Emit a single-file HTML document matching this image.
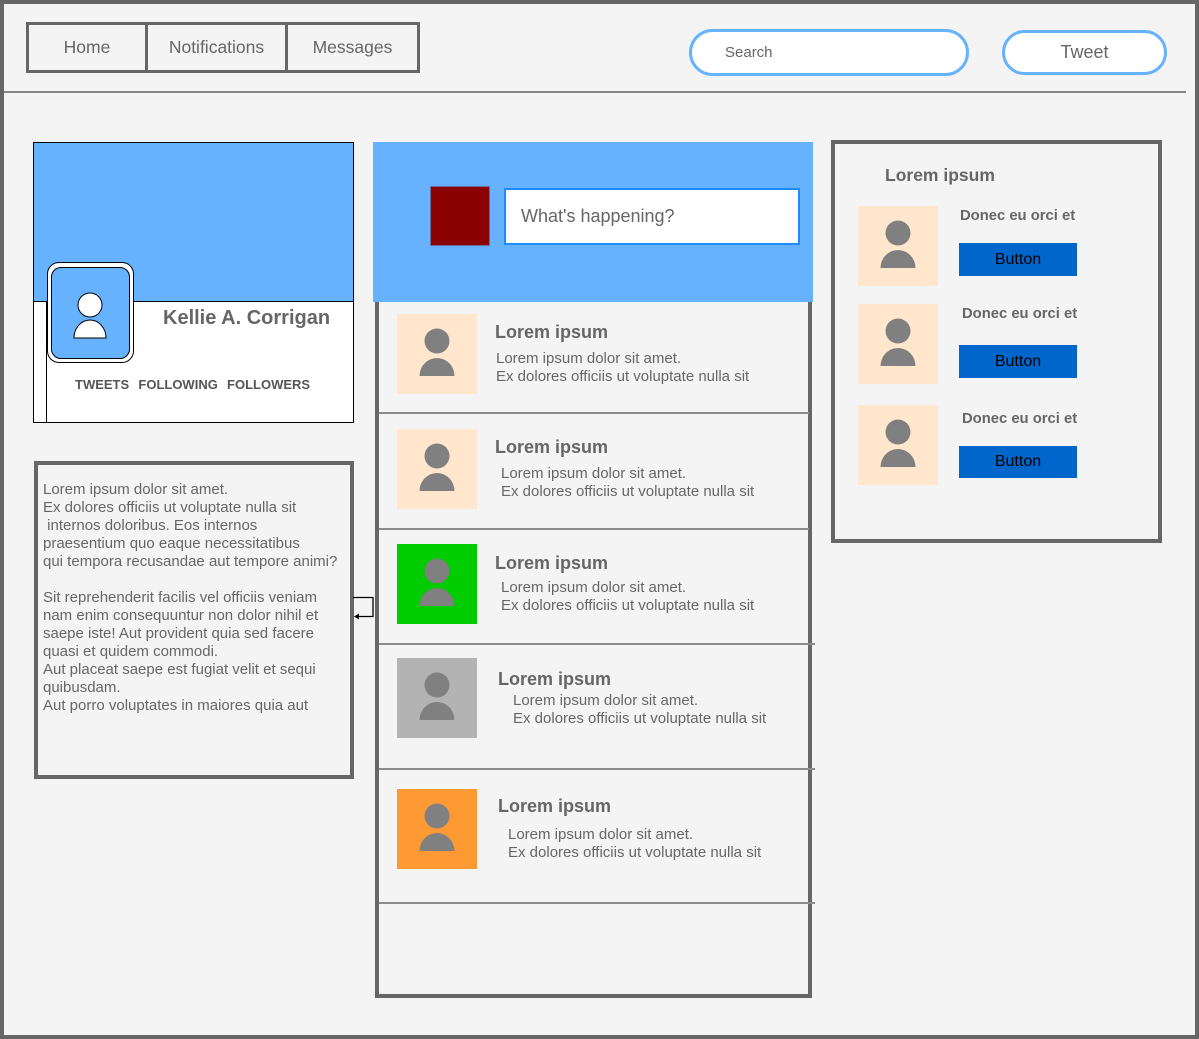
<!DOCTYPE html>
<html><head><meta charset="utf-8"><style>
*{margin:0;padding:0;box-sizing:border-box}
body{width:1199px;height:1039px;background:#f4f4f4;font-family:"Liberation Sans",Arial,sans-serif;color:#666;position:relative;overflow:hidden}
.a{position:absolute}
.frame{left:0;top:0;width:1199px;height:1039px;border:4px solid #666}
.nav{top:22px;height:51px;border:3px solid #666;font-size:17.5px;text-align:center;line-height:45px;color:#666}
.pill{border:3px solid #66b2ff;background:#fff;border-radius:24px}
.av{width:80px;height:80px}
.t{font-weight:bold;font-size:18px;line-height:22px;color:#666}
.s{font-size:15px;line-height:18px;color:#666}
.sep{height:2px;background:#8c8c8c}
.btn{width:118px;height:33px;background:#0066cc;color:#000;font-size:16px;text-align:center;line-height:33px}
.d{font-weight:bold;font-size:14.8px;color:#666}
</style></head><body>
<div class="a frame"></div>
<div class="a nav" style="left:26px;width:122px">Home</div>
<div class="a nav" style="left:145px;width:143px">Notifications</div>
<div class="a nav" style="left:285px;width:135px">Messages</div>
<div class="a pill" style="left:689px;top:29px;width:280px;height:47px"></div>
<div class="a" style="left:725px;top:44px;font-size:15px;color:#666">Search</div>
<div class="a pill" style="left:1002px;top:30px;width:165px;height:45px;text-align:center;line-height:39px;font-size:18px;color:#666">Tweet</div>
<div class="a" style="left:4px;top:91px;width:1182px;height:2px;background:#888"></div>

<!-- profile -->
<div class="a" style="left:33px;top:142px;width:321px;height:281px;border:1px solid #000;background:#fff"></div>
<div class="a" style="left:34px;top:143px;width:319px;height:159px;background:#66b2ff;border-bottom:1px solid #000"></div>
<div class="a" style="left:46px;top:302px;width:1px;height:120px;background:#000"></div>
<div class="a" style="left:47px;top:262px;width:87px;height:101px;border:1px solid #000;border-radius:12px;background:#fff"></div>
<div class="a" style="left:51px;top:267px;width:79px;height:92px;border:1px solid #000;border-radius:10px;background:#66b2ff"></div>
<svg class="a" style="left:51px;top:267px" width="79" height="92"><circle cx="39" cy="38" r="12" fill="#fff" stroke="#000"/><path d="M23 71 A16 18 0 0 1 55 71 Z" fill="#fff" stroke="#000"/></svg>
<div class="a" style="left:163px;top:307px;font-size:20px;font-weight:bold;color:#666">Kellie A. Corrigan</div>
<div class="a" style="left:75px;top:377px;font-size:13px;font-weight:bold;color:#555;word-spacing:1px">TWEETS &nbsp;FOLLOWING &nbsp;FOLLOWERS</div>

<!-- text box -->
<div class="a" style="left:34px;top:461px;width:320px;height:318px;border:4px solid #666"></div>
<div class="a s" style="left:43px;top:481px;white-space:pre">Lorem ipsum dolor sit amet.
Ex dolores officiis ut voluptate nulla sit
 internos doloribus. Eos internos
praesentium quo eaque necessitatibus
qui tempora recusandae aut tempore animi?

Sit reprehenderit facilis vel officiis veniam
nam enim consequuntur non dolor nihil et
saepe iste! Aut provident quia sed facere
quasi et quidem commodi.
Aut placeat saepe est fugiat velit et sequi
quibusdam.
Aut porro voluptates in maiores quia aut</div>
<svg class="a" style="left:353px;top:594px" width="22" height="26"><path d="M0 3.5 H20 V22.5 H4" fill="none" stroke="#000" stroke-width="1.3"/><path d="M1 22.5 L6 19.5 L6 25.5 Z" fill="#000"/></svg>

<!-- center -->
<div class="a" style="left:375px;top:300px;width:437px;height:698px;border:4px solid #666;border-top:none"></div>
<div class="a" style="left:373px;top:142px;width:440px;height:160px;background:#66b2ff"></div>
<div class="a" style="left:430px;top:186px;width:60px;height:60px;background:#8b0000;border:1px solid #6a6a9a"></div>
<div class="a" style="left:504px;top:188px;width:296px;height:57px;background:#fff;border:2px solid #1a8cff;font-size:18px;line-height:53px;padding-left:15px;color:#666">What's happening?</div>

<div class="a sep" style="left:379px;top:412px;width:430px"></div>
<div class="a sep" style="left:379px;top:528px;width:430px"></div>
<div class="a sep" style="left:379px;top:643px;width:436px"></div>
<div class="a sep" style="left:379px;top:768px;width:436px"></div>
<div class="a sep" style="left:379px;top:902px;width:436px"></div>

<svg width="0" height="0" style="position:absolute"><symbol id="p" viewBox="0 0 80 80"><circle cx="40" cy="27" r="12.5" fill="#808080"/><path d="M22.5 62 A17.5 18 0 0 1 57.5 62 Z" fill="#808080"/></symbol></svg>

<svg class="a av" style="left:397px;top:314px;background:#ffe6cc"><use href="#p"/></svg>
<div class="a t" style="left:495px;top:321px">Lorem ipsum</div>
<div class="a s" style="left:496px;top:350px">Lorem ipsum dolor sit amet.<br>Ex dolores officiis ut voluptate nulla sit</div>

<svg class="a av" style="left:397px;top:429px;background:#ffe6cc"><use href="#p"/></svg>
<div class="a t" style="left:495px;top:436px">Lorem ipsum</div>
<div class="a s" style="left:501px;top:465px">Lorem ipsum dolor sit amet.<br>Ex dolores officiis ut voluptate nulla sit</div>

<svg class="a av" style="left:397px;top:544px;background:#00cc00"><use href="#p"/></svg>
<div class="a t" style="left:495px;top:552px">Lorem ipsum</div>
<div class="a s" style="left:501px;top:579px">Lorem ipsum dolor sit amet.<br>Ex dolores officiis ut voluptate nulla sit</div>

<svg class="a av" style="left:397px;top:658px;background:#b3b3b3"><use href="#p"/></svg>
<div class="a t" style="left:498px;top:668px">Lorem ipsum</div>
<div class="a s" style="left:513px;top:692px">Lorem ipsum dolor sit amet.<br>Ex dolores officiis ut voluptate nulla sit</div>

<svg class="a av" style="left:397px;top:789px;background:#ff9933"><use href="#p"/></svg>
<div class="a t" style="left:498px;top:795px">Lorem ipsum</div>
<div class="a s" style="left:508px;top:826px">Lorem ipsum dolor sit amet.<br>Ex dolores officiis ut voluptate nulla sit</div>

<!-- right -->
<div class="a" style="left:831px;top:140px;width:331px;height:403px;border:4px solid #666"></div>
<div class="a" style="left:885px;top:165px;font-size:17.5px;font-weight:bold;color:#666">Lorem ipsum</div>
<svg class="a av" style="left:858px;top:206px;background:#ffe6cc"><use href="#p"/></svg>
<div class="a d" style="left:960px;top:208px">Donec eu orci et</div>
<div class="a btn" style="left:959px;top:243px">Button</div>
<svg class="a av" style="left:858px;top:304px;background:#ffe6cc"><use href="#p"/></svg>
<div class="a d" style="left:962px;top:306px">Donec eu orci et</div>
<div class="a btn" style="left:959px;top:345px">Button</div>
<svg class="a av" style="left:858px;top:405px;background:#ffe6cc"><use href="#p"/></svg>
<div class="a d" style="left:962px;top:411px">Donec eu orci et</div>
<div class="a btn" style="left:959px;top:446px;height:32px;line-height:32px">Button</div>
</body></html>
